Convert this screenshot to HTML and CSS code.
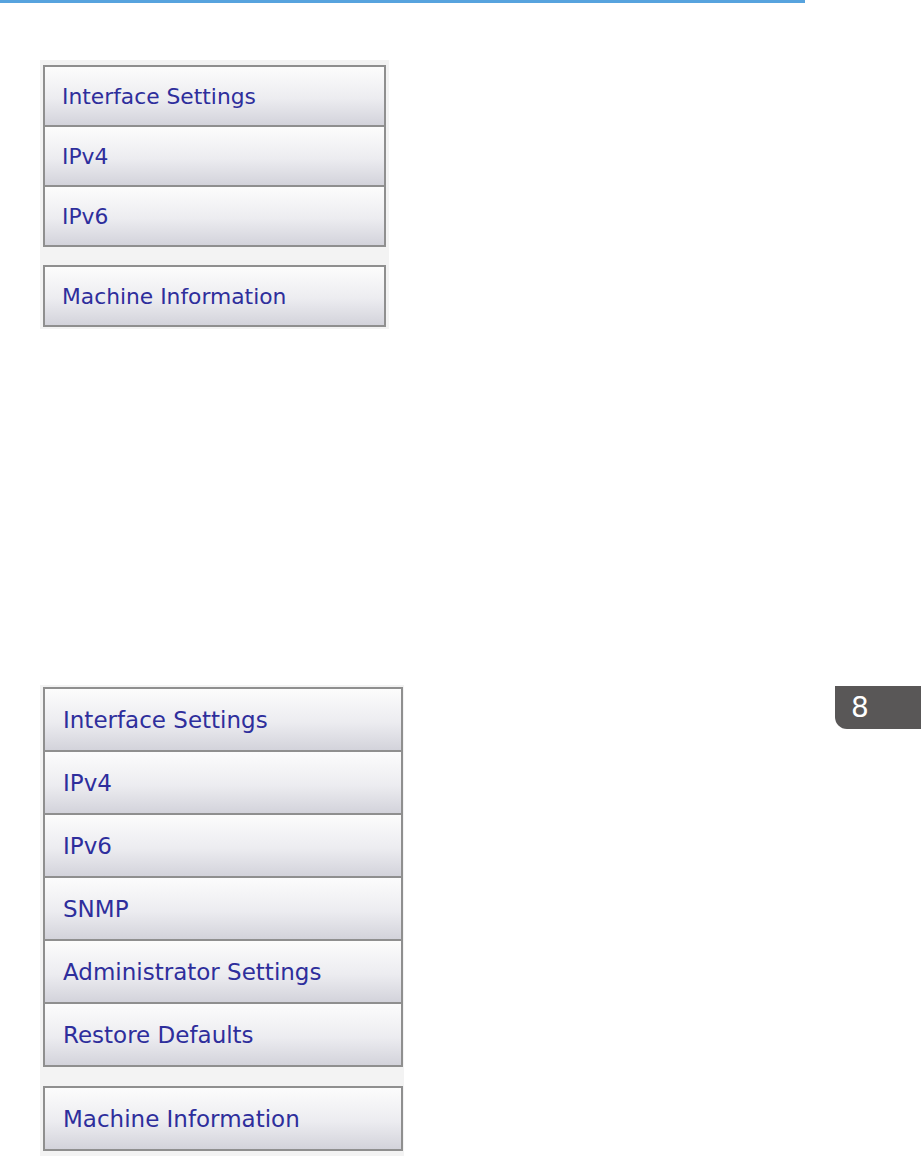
FILE: index.html
```html
<!DOCTYPE html>
<html>
  <head>
    <meta charset="UTF-8">
    <title>Web Image Monitor menu</title>
    <link rel="stylesheet" href="styles.css">
  </head>
  <body>
    <div class="top-rule"></div>

    <!-- short menu -->
    <div class="menu menu-small">
      <div class="menu-group">
        <div class="menu-item">Interface Settings</div>
        <div class="menu-item">IPv4</div>
        <div class="menu-item">IPv6</div>
      </div>
      <div class="menu-group">
        <div class="menu-item">Machine Information</div>
      </div>
    </div>

    <div class="chapter-row">
      <!-- full menu -->
      <div class="menu menu-large">
        <div class="menu-group">
          <div class="menu-item">Interface Settings</div>
          <div class="menu-item">IPv4</div>
          <div class="menu-item">IPv6</div>
          <div class="menu-item">SNMP</div>
          <div class="menu-item">Administrator Settings</div>
          <div class="menu-item">Restore Defaults</div>
        </div>
        <div class="menu-group">
          <div class="menu-item">Machine Information</div>
        </div>
      </div>
      <div class="chapter-tab">8</div>
    </div>
  </body>
</html>
```

FILE: styles.css
```css
body {
  margin: 0;
  background-color: #fff;
  font-family: "DejaVu Sans", Verdana, sans-serif;
}

.top-rule {
  width: 805px;
  height: 3px;
  background-color: #57a3de;
}

.menu {
  background-color: #f3f3f3;
  margin-left: 40px;
  display: flex;
  flex-direction: column;
}

.menu-group {
  border: 2px solid #8f8f8f;
  border-top-width: 0;
}

.menu-item {
  display: flex;
  align-items: center;
  border-top: 2px solid #8f8f8f;
  background: linear-gradient(#fcfcfc, #ececf0 55%, #d3d3db);
  color: #2e2e9c;
}

/* first panel */
.menu-small {
  width: 343px;
  margin-top: 57px;
  padding: 5px 3px 2px 3px;
  gap: 18px;
}

.menu-small .menu-item {
  height: 58px;
  padding-left: 17px;
  font-size: 21.8px;
}

/* second panel, next to the chapter tab */
.chapter-row {
  display: flex;
  align-items: flex-start;
  margin-top: 356px;
}

.menu-large {
  width: 360px;
  padding: 2px 1px 6px 3px;
  gap: 19px;
}

.menu-large .menu-item {
  height: 61px;
  padding-left: 18px;
  font-size: 23px;
}

.chapter-tab {
  margin-left: auto;
  margin-top: 1px;
  width: 86px;
  height: 43px;
  background-color: #595757;
  border-bottom-left-radius: 12px;
  color: #fff;
  font-family: "DejaVu Sans", sans-serif;
  font-size: 28px;
  display: flex;
  align-items: center;
  padding-left: 16px;
  box-sizing: border-box;
}
```
